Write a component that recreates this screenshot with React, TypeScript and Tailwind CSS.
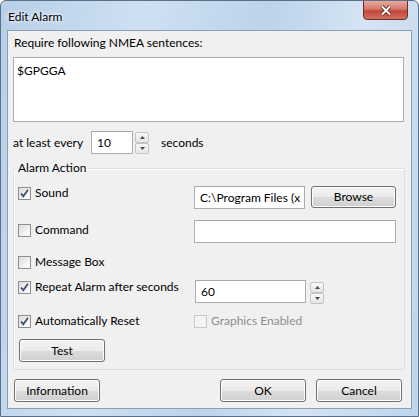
import React from 'react';

const font = { fontFamily: 'Lato, "Noto Sans", sans-serif' };

const CheckBox: React.FC<{ checked?: boolean; disabled?: boolean }> = ({ checked, disabled }) => (
  <span
    className={`w-[13px] h-[13px] shrink-0 border flex items-center justify-center ${
      disabled ? 'border-[#c9c9c9] bg-[#f4f4f4]' : 'border-[#8e8f8f] bg-gradient-to-br from-[#dcdcdc] to-[#ffffff]'
    }`}
  >
    {checked && (
      <svg width="11" height="11" viewBox="0 0 11 11">
        <path d="M2 5.5 L4.3 8.2 L9 1.8" fill="none" stroke="#3d4f6f" strokeWidth="1.8" />
      </svg>
    )}
  </span>
);

const Check: React.FC<{ label: string; checked?: boolean; disabled?: boolean }> = ({ label, checked, disabled }) => (
  <label className="flex items-center gap-[4px] h-[16px]">
    <CheckBox checked={checked} disabled={disabled} />
    <span className={`text-[12px] leading-[16px] ${disabled ? 'text-[#8d8d8d]' : 'text-black'}`}>{label}</span>
  </label>
);

const Btn: React.FC<{ label: string; className?: string }> = ({ label, className }) => (
  <button
    className={`rounded-[3px] border border-[#707070] text-[12px] text-black bg-[linear-gradient(#f2f2f2_0%,#ebebeb_50%,#dddddd_51%,#cfcfcf_100%)] shadow-[inset_0_0_0_1px_#fcfcfc] flex items-center justify-center ${className ?? ''}`}
  >
    {label}
  </button>
);

const Spin: React.FC<{ className?: string }> = ({ className }) => (
  <div className={`flex flex-col w-[14px] ${className ?? ''}`}>
    {[0, 1].map((i) => (
      <div
        key={i}
        className="h-[11px] border border-[#c4c4c4] rounded-[2px] bg-gradient-to-b from-[#f8f8f8] to-[#e6e6e6] flex items-center justify-center"
      >
        <svg width="5" height="3" viewBox="0 0 5 3">
          <path d={i === 0 ? 'M0 3 L2.5 0 L5 3 Z' : 'M0 0 L2.5 3 L5 0 Z'} fill="#4a4a4a" />
        </svg>
      </div>
    ))}
  </div>
);

const TextBox: React.FC<{ value?: string; className?: string }> = ({ value, className }) => (
  <div
    className={`bg-white border border-[#abadb3] border-t-[#a3a6ad] px-[5px] text-[12px] text-black flex items-center overflow-hidden whitespace-nowrap ${className ?? ''}`}
  >
    {value}
  </div>
);

export default function App() {
  return (
    <div
      className="w-[419px] h-[417px] overflow-hidden rounded-t-[6px] border border-[#5a6f88] bg-[linear-gradient(100deg,#b7cfe8_0%,#cfe0f2_30%,#bcd3ea_55%,#d5e4f4_75%,#bed4ea_100%)] flex flex-col"
      style={font}
    >
      {/* title bar */}
      <div className="h-[29px] flex items-start justify-between shrink-0">
        <span className="ml-[7px] mt-[8px] text-[12px] leading-[16px] text-black [text-shadow:0_0_6px_#ffffff,0_0_3px_#ffffff]">
          Edit Alarm
        </span>
        <div className="mr-[10px] mt-[-1px] w-[45px] h-[20px] rounded-b-[4px] border border-[#6b2b26] bg-[linear-gradient(#e9a99c_0%,#d2786a_45%,#c4453a_55%,#d0705e_100%)] flex items-center justify-center">
          <svg width="12" height="11" viewBox="0 0 12 11">
            <path d="M2 1.5 L10 9.5 M10 1.5 L2 9.5" stroke="#4a1c18" strokeWidth="3.6" />
            <path d="M2 1.5 L10 9.5 M10 1.5 L2 9.5" stroke="#ffffff" strokeWidth="2" />
          </svg>
        </div>
      </div>

      {/* client area */}
      <div className="mx-[6px] h-[379px] border border-[#8aa0b8] bg-[#f0f0f0] flex flex-col">
        <div className="ml-[6px] mt-[4px] text-[12px] leading-[16px] text-black">Require following NMEA sentences:</div>
        <div className="ml-[5px] mt-[6px] w-[391px] h-[65px] bg-white border border-[#abadb3] px-[3px] pt-[5px] text-[12px] leading-[16px] text-black">
          $GPGGA
        </div>

        <div className="ml-[5px] mt-[9px] h-[23px] flex items-center">
          <span className="text-[12px] text-black w-[78px]">at least every</span>
          <TextBox value="10" className="w-[42px] h-[23px]" />
          <Spin className="ml-[2px]" />
          <span className="ml-[12px] text-[12px] text-black">seconds</span>
        </div>

        <fieldset className="ml-[5px] mt-[6px] w-[392px] h-[210px] border border-[#d5dfe5] rounded-[2px] shadow-[inset_1px_1px_0_#ffffff] px-0">
          <legend className="ml-[2px] px-[2px] text-[12px] leading-[16px] text-black">Alarm Action</legend>

          <div className="ml-[4px] mt-[9px] flex items-start">
            <div className="w-[176px]">
              <Check label="Sound" checked />
            </div>
            <TextBox value="C:\Program Files (x" className="mt-[1px] w-[111px] h-[23px]" />
            <Btn label="Browse" className="ml-[6px] mt-[1px] w-[85px] h-[22px]" />
          </div>

          <div className="ml-[4px] mt-[11px] flex items-start">
            <div className="w-[176px] pt-[2px]">
              <Check label="Command" />
            </div>
            <TextBox className="w-[202px] h-[23px]" />
          </div>

          <div className="ml-[4px] mt-[11px] flex items-start">
            <Check label="Message Box" />
          </div>

          <div className="ml-[4px] mt-[9px] flex items-start">
            <div className="w-[177px]">
              <Check label="Repeat Alarm after seconds" checked />
            </div>
            <TextBox value="60" className="mt-[1px] w-[111px] h-[23px]" />
            <Spin className="ml-[4px] mt-[3px]" />
          </div>

          <div className="ml-[4px] mt-[9px] flex items-start">
            <div className="w-[176px]">
              <Check label="Automatically Reset" checked />
            </div>
            <Check label="Graphics Enabled" disabled />
          </div>

          <Btn label="Test" className="ml-[5px] mt-[10px] w-[86px] h-[23px]" />
        </fieldset>

        <div className="mt-[9px] flex items-center">
          <Btn label="Information" className="ml-[6px] w-[86px] h-[23px]" />
          <Btn label="OK" className="ml-[120px] w-[86px] h-[23px]" />
          <Btn label="Cancel" className="ml-[10px] w-[86px] h-[23px]" />
        </div>
      </div>
    </div>
  );
}
